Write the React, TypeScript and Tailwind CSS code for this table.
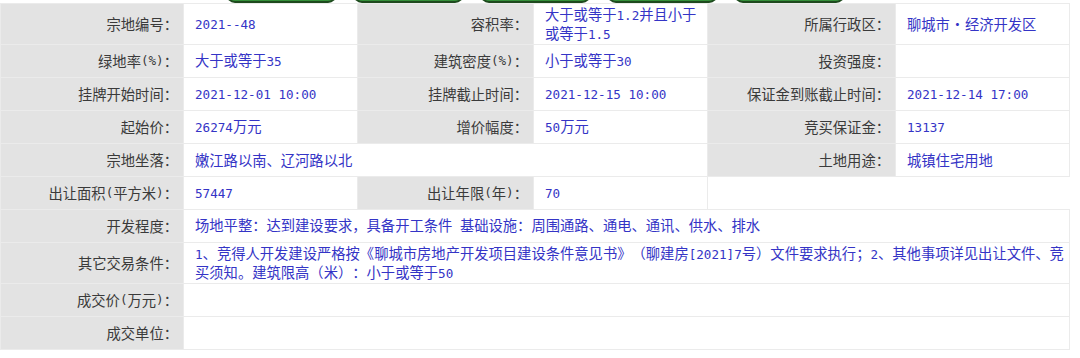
import React from "react";

function T({ s }: { s: string }) {
  const parts = s.split(/([\x20-\x7e]+)/);
  return (
    <>
      {parts.map((p, i) =>
        i % 2 === 1 ? (
          <span key={i} className="font-['DejaVu_Sans_Mono',monospace] text-[12.6px] whitespace-pre">
            {p}
          </span>
        ) : (
          <React.Fragment key={i}>{p}</React.Fragment>
        )
      )}
    </>
  );
}

function L({ s }: { s: string }) {
  return (
    <div className="bg-[#e3e3e3] text-[#3a3a3a] flex items-center justify-end pr-[5px] whitespace-nowrap">
      <T s={s} />
    </div>
  );
}

function V({ children, span = "" }: { children?: React.ReactNode; span?: string }) {
  return (
    <div className={`bg-white text-[#3434c6] flex items-center pl-[11px] pr-[2px] whitespace-nowrap ${span}`}>
      <div>{children}</div>
    </div>
  );
}

export default function App() {
  return (
    <div className="w-[1080px] h-[358px] bg-white overflow-hidden font-['Noto_Sans_CJK_SC',sans-serif] text-[14.3px] leading-[16px] [text-spacing-trim:space-all]">
      <div className="flex items-end h-[3px] overflow-hidden pl-[226px] gap-[16px]">
        {[0, 1, 2, 3, 4].map((i) => (
          <div
            key={i}
            className="shrink-0 w-[111px] h-[20px] rounded-[9px] border-2 border-[#1e4a1e] bg-[#35903a]"
          />
        ))}
      </div>
      <div className="w-[1070px] bg-[#ebebeb] p-[1px] grid grid-cols-[182px_173px_175px_173px_187px_173px] grid-rows-[40px_32px_32px_32px_32px_32px_32px_40px_32px_32px] gap-[1px]">
        <L s="宗地编号：" />
        <V><T s="2021--48" /></V>
        <L s="容积率：" />
        <V>
          <div className="leading-[17px]">
            <T s="大于或等于1.2并且小于" />
          </div>
          <div className="leading-[17px]">
            <T s="或等于1.5" />
          </div>
        </V>
        <L s="所属行政区：" />
        <V>
          聊城市<span className="inline-block w-[15px] text-center">·</span>经济开发区
        </V>

        <L s="绿地率(%)：" />
        <V><T s="大于或等于35" /></V>
        <L s="建筑密度(%)：" />
        <V><T s="小于或等于30" /></V>
        <L s="投资强度：" />
        <V />

        <L s="挂牌开始时间：" />
        <V><T s="2021-12-01 10:00" /></V>
        <L s="挂牌截止时间：" />
        <V><T s="2021-12-15 10:00" /></V>
        <L s="保证金到账截止时间：" />
        <V><T s="2021-12-14 17:00" /></V>

        <L s="起始价：" />
        <V><T s="26274万元" /></V>
        <L s="增价幅度：" />
        <V><T s="50万元" /></V>
        <L s="竞买保证金：" />
        <V><T s="13137" /></V>

        <L s="宗地坐落：" />
        <V span="col-span-3">嫩江路以南、辽河路以北</V>
        <L s="土地用途：" />
        <V>城镇住宅用地</V>

        <L s="出让面积(平方米)：" />
        <V><T s="57447" /></V>
        <L s="出让年限(年)：" />
        <V><T s="70" /></V>
        <div className="col-span-2 bg-white -mr-[1px]" />

        <L s="开发程度：" />
        <V span="col-span-5">
          <T s="场地平整：达到建设要求，具备开工条件 基础设施：周围通路、通电、通讯、供水、排水" />
        </V>

        <L s="其它交易条件：" />
        <V span="col-span-5">
          <div className="leading-[17px]">
            <T s="1、竞得人开发建设严格按《聊城市房地产开发项目建设条件意见书》（聊建房[2021]7号）文件要求执行；2、其他事项详见出让文件、竞" />
          </div>
          <div className="leading-[17px]">
            <T s="买须知。建筑限高（米）：小于或等于50" />
          </div>
        </V>

        <L s="成交价(万元)：" />
        <V span="col-span-5" />

        <L s="成交单位：" />
        <V span="col-span-5" />
      </div>
    </div>
  );
}
